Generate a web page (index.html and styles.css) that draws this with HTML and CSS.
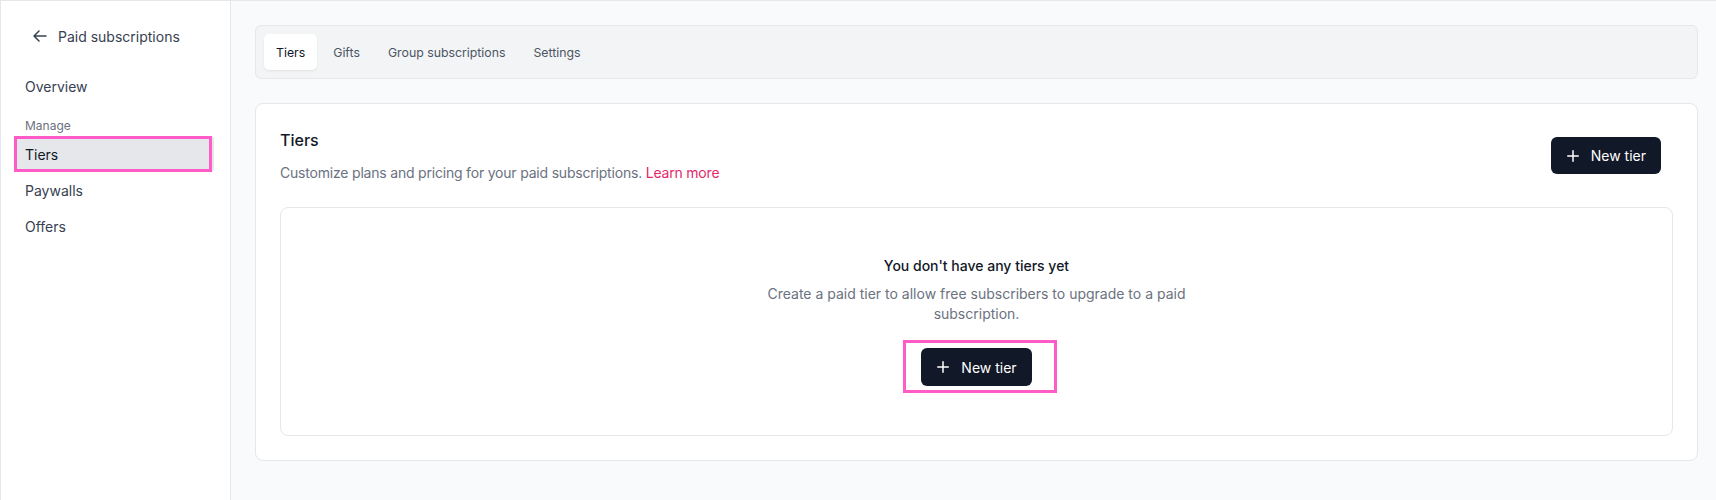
FILE: index.html
```html
<!DOCTYPE html>
<html lang="en">
<head>
    <meta charset="UTF-8">
    <meta name="viewport" content="width=device-width, initial-scale=1.0">
    <title>Paid subscriptions - Tiers</title>
    <link rel="stylesheet" href="styles.css">
</head>
<body>
    <div class="app">
        <aside class="sidebar">
            <a class="back" href="#">
                <svg width="16" height="16" viewBox="0 0 16 16" fill="none" stroke="currentColor" stroke-width="1.5" stroke-linecap="round" stroke-linejoin="round">
                    <path d="M14 8H2M7 3L2 8l5 5"/>
                </svg>
                <span>Paid subscriptions</span>
            </a>

            <nav class="nav">
                <a class="nav-item" href="#">Overview</a>
                <div class="nav-label">Manage</div>
                <a class="nav-item active" href="#">Tiers<span class="mark"></span></a>
                <a class="nav-item" href="#">Paywalls</a>
                <a class="nav-item" href="#">Offers</a>
            </nav>
        </aside>

        <main class="main">
            <div class="tabs">
                <a class="tab active" href="#">Tiers</a>
                <a class="tab" href="#">Gifts</a>
                <a class="tab" href="#">Group subscriptions</a>
                <a class="tab" href="#">Settings</a>
            </div>

            <section class="card">
                <div class="card-head">
                    <div>
                        <h2>Tiers</h2>
                        <p class="desc">Customize plans and pricing for your paid subscriptions. <a href="#">Learn more</a></p>
                    </div>
                    <button class="btn">
                        <svg width="12" height="12" viewBox="0 0 12 12" fill="none" stroke="currentColor" stroke-width="1.5" stroke-linecap="round">
                            <path d="M6 0.75v10.5M0.75 6h10.5"/>
                        </svg>
                        New tier
                    </button>
                </div>

                <div class="empty">
                    <h3>You don't have any tiers yet</h3>
                    <p>Create a paid tier to allow free subscribers to upgrade to a paid subscription.</p>
                    <div class="empty-action">
                        <button class="btn">
                            <svg width="12" height="12" viewBox="0 0 12 12" fill="none" stroke="currentColor" stroke-width="1.5" stroke-linecap="round">
                                <path d="M6 0.75v10.5M0.75 6h10.5"/>
                            </svg>
                            New tier
                        </button>
                        <span class="mark"></span>
                    </div>
                </div>
            </section>
        </main>
    </div>
</body>
</html>
```

FILE: styles.css
```css
* { box-sizing: border-box; }
body {
    margin: 0;
    font-family: Inter, "Noto Sans", sans-serif;
    font-size: 14px;
    color: #111827;
    background: #f9fafb;
}
a { text-decoration: none; color: inherit; }

.app {
    display: flex;
    height: 100vh;
    border-top: 1px solid #e5e7eb;
    border-left: 1px solid #e5e7eb;
}

/* sidebar */
.sidebar {
    width: 230px;
    flex-shrink: 0;
    background: #fff;
    border-right: 1px solid #e5e7eb;
    padding: 23px 16px 0 13px;
}
.back {
    display: flex;
    align-items: center;
    gap: 10px;
    height: 24px;
    padding-left: 18px;
    color: #374151;
    font-size: 14px;
}
.nav { margin-top: 20px; }
.nav-item {
    position: relative;
    display: flex;
    align-items: center;
    height: 36px;
    padding: 0 11px;
    border-radius: 4px;
    color: #374151;
}
.nav-item.active { background: #e5e7eb; color: #111827; }
.nav-label {
    margin: 14px 0 2px;
    padding: 0 11px;
    font-size: 12px;
    line-height: 16px;
    color: #6b7280;
}

/* pink highlight frames */
.mark {
    position: absolute;
    border: 3px solid #ff5cc7;
    pointer-events: none;
}
.nav-item .mark { top: 0; bottom: 0; left: 0; right: 2px; }

/* main */
.main {
    flex: 1;
    padding: 24px 18px 0 24px;
}
.tabs {
    display: flex;
    gap: 4px;
    padding: 8px;
    background: #f3f4f6;
    border: 1px solid #e5e7eb;
    border-radius: 6px;
}
.tab {
    display: flex;
    align-items: center;
    height: 36px;
    padding: 0 12px;
    border-radius: 5px;
    font-size: 12.3px;
    color: #4b5563;
}
.tab.active {
    background: #fff;
    color: #111827;
    box-shadow: 0 1px 2px rgba(0, 0, 0, 0.08);
}

.card {
    margin-top: 24px;
    background: #fff;
    border: 1px solid #e5e7eb;
    border-radius: 8px;
    padding: 24px;
}
.card-head {
    display: flex;
    align-items: center;
    justify-content: space-between;
    padding-right: 12px;
    margin-bottom: 24px;
}
.card-head h2 {
    margin: 0;
    font-size: 16px;
    font-weight: 500;
    line-height: 24px;
}
.desc {
    margin: 11px 0 0;
    line-height: 20px;
    letter-spacing: -0.2px;
    color: #6b7280;
}
.desc a { color: #e3286b; }

.btn {
    display: inline-flex;
    align-items: center;
    gap: 12px;
    height: 37px;
    padding: 0 15px 0 16px;
    border: none;
    border-radius: 6px;
    background: #111827;
    color: #fff;
    font-family: inherit;
    font-size: 14px;
    cursor: pointer;
}

.empty {
    border: 1px solid #e5e7eb;
    border-radius: 8px;
    padding: 48px 24px 49px;
    text-align: center;
}
.empty h3 {
    margin: 0;
    font-size: 14px;
    font-weight: 500;
    line-height: 20px;
}
.empty p {
    max-width: 448px;
    margin: 8px auto 24px;
    line-height: 20px;
    color: #6b7280;
}
.empty-action {
    position: relative;
    display: inline-block;
    vertical-align: top;
}
.empty-action .btn { display: flex; height: 38px; }
.empty-action .mark { top: -8px; bottom: -7px; left: -18px; right: -25px; }
```
